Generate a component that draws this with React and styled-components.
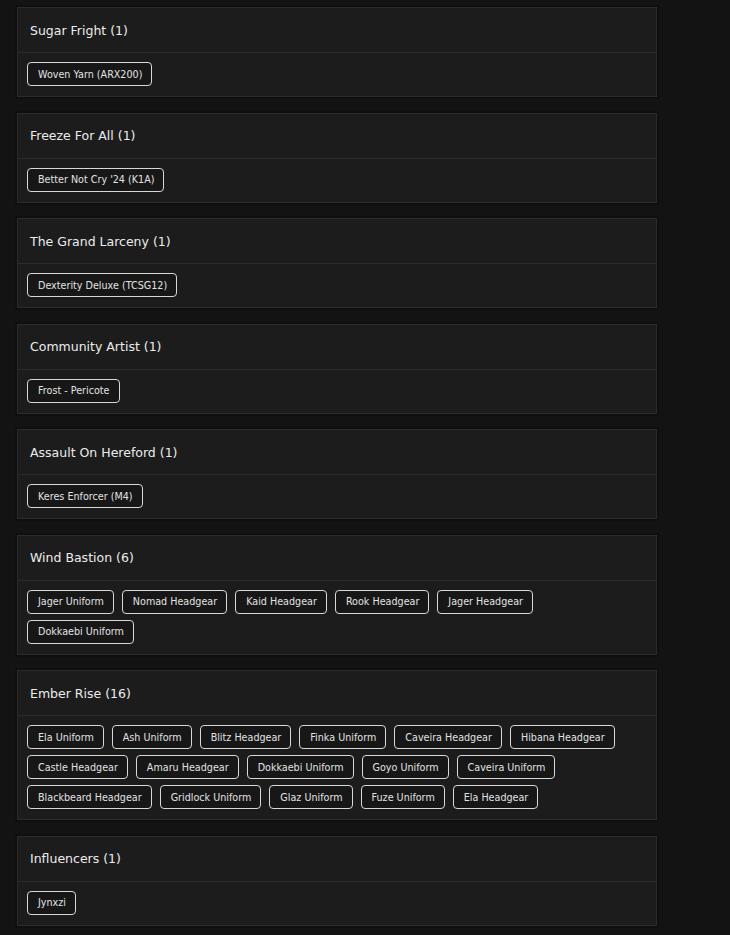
import React from 'react'
import styled, { createGlobalStyle } from 'styled-components'

const GlobalStyle = createGlobalStyle`
  body {
    margin: 0;
    background: #131313;
    font-family: "DejaVu Sans", "Open Sans", sans-serif;
  }
`

const events = [
  { name: 'Sugar Fright', items: ['Woven Yarn (ARX200)'] },
  { name: 'Freeze For All', items: ["Better Not Cry '24 (K1A)"] },
  { name: 'The Grand Larceny', items: ['Dexterity Deluxe (TCSG12)'] },
  { name: 'Community Artist', items: ['Frost - Pericote'] },
  { name: 'Assault On Hereford', items: ['Keres Enforcer (M4)'] },
  {
    name: 'Wind Bastion',
    items: ['Jager Uniform', 'Nomad Headgear', 'Kaid Headgear', 'Rook Headgear', 'Jager Headgear', 'Dokkaebi Uniform'],
  },
  {
    name: 'Ember Rise',
    items: [
      'Ela Uniform', 'Ash Uniform', 'Blitz Headgear', 'Finka Uniform', 'Caveira Headgear', 'Hibana Headgear',
      'Castle Headgear', 'Amaru Headgear', 'Dokkaebi Uniform', 'Goyo Uniform', 'Caveira Uniform',
      'Blackbeard Headgear', 'Gridlock Uniform', 'Glaz Uniform', 'Fuze Uniform', 'Ela Headgear',
    ],
  },
  { name: 'Influencers', items: ['Jynxzi'] },
]

const Page = styled.div`
  display: flex;
  flex-direction: column;
  gap: 15.5px;
  padding: 7px 73px 20px 17px;
`

const Card = styled.section`
  background: #1c1c1c;
  border: 1px solid #2b2b2b;
  box-shadow: 0 0 0 2px #0f0f0f;
`

const Header = styled.div`
  display: flex;
  align-items: center;
  height: 44px;
  padding: 0 12px;
  border-bottom: 1px solid #2b2b2b;
  color: #ececec;
  font-size: 12.5px;
  font-weight: 500;
`

const Body = styled.div`
  display: flex;
  flex-wrap: wrap;
  gap: 6px 8px;
  padding: 9px 9px 10px;
`

const Chip = styled.span`
  display: inline-flex;
  align-items: center;
  height: 22px;
  padding: 0 9px 0 10px;
  border: 1px solid #d8d8d8;
  border-radius: 4px;
  background: #171717;
  color: #e2e2e2;
  font-size: 9.6px;
  white-space: nowrap;
`

export default function App() {
  return (
    <>
      <GlobalStyle />
      <Page>
        {events.map((ev) => (
          <Card key={ev.name}>
            <Header>{ev.name} ({ev.items.length})</Header>
            <Body>
              {ev.items.map((item, i) => (
                <Chip key={`${ev.name}-${i}`}>{item}</Chip>
              ))}
            </Body>
          </Card>
        ))}
      </Page>
    </>
  )
}
